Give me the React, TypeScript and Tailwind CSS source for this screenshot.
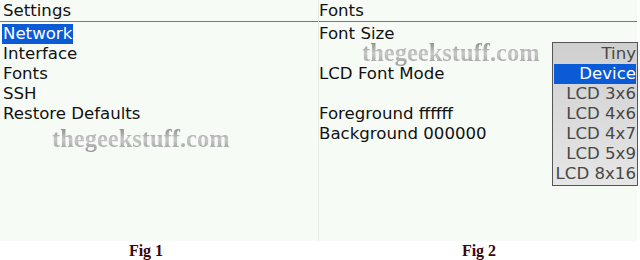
import React from 'react';

const settingsItems = ['Network', 'Interface', 'Fonts', 'SSH', 'Restore Defaults'];
const fontRows = ['Font Size', '', 'LCD Font Mode', '', 'Foreground ffffff', 'Background 000000'];
const sizeOptions = ['Tiny', 'Device', 'LCD 3x6', 'LCD 4x6', 'LCD 4x7', 'LCD 5x9', 'LCD 8x16'];

const Watermark: React.FC<{ className: string }> = ({ className }) => (
  <div
    className={`absolute font-bold text-[24.5px] leading-none text-transparent bg-clip-text bg-gradient-to-b from-[#8a8a8a] via-[#c8c8c8] to-[#9a9a9a] ${className}`}
    style={{ fontFamily: '"Liberation Serif", serif' }}
  >
    thegeekstuff.com
  </div>
);

const Screen: React.FC<{ title: string; children: React.ReactNode; className?: string; pad?: string }> = ({ title, children, className = '', pad = 'pl-[3px]' }) => (
  <div className={`relative h-full ${className}`}>
    <div className={`h-[22px] ${pad} text-[16.6px] leading-[21px] text-[#111] border-b border-[#7a7a7a]`}>{title}</div>
    <div className="pt-[2px]">{children}</div>
  </div>
);

export default function App() {
  return (
    <div className="w-[640px] h-[260px] bg-white overflow-hidden" style={{ fontFamily: '"DejaVu Sans", sans-serif' }}>
      <div className="flex h-[241px] w-[637px] bg-[#f6fbf6]">
        <Screen title="Settings" className="w-[318px] shrink-0">
          {settingsItems.map((item, i) => (
            <div key={item} className="h-[20px] pl-[3px] text-[16.6px] leading-[20px] text-[#111]">
              <span className={i === 0 ? 'bg-[#0b5ad6] text-white px-[1px] -ml-[1px] inline-block h-[20px]' : ''}>{item}</span>
            </div>
          ))}
          <Watermark className="left-[52px] top-[127px]" />
        </Screen>

        <Screen title="Fonts" pad="pl-0" className="w-[319px] shrink-0 border-l border-[#e8ece8]">
          {fontRows.map((row, i) => (
            <div key={i} className="h-[20px] text-[16.6px] leading-[20px] text-[#111]">{row}</div>
          ))}
          <Watermark className="left-[43px] top-[41px]" />
          <div className="absolute left-[233px] top-[42px] w-[86px] border border-[#555] bg-gradient-to-b from-[#cfcfcf] to-[#e6e6e6] p-[1px]">
            {sizeOptions.map((opt, i) => (
              <div
                key={opt}
                className={`h-[20px] text-right text-[16.6px] leading-[20px] whitespace-nowrap ${i === 1 ? 'bg-[#0b5ad6] text-white' : 'text-[#484848]'}`}
              >
                {opt}
              </div>
            ))}
          </div>
        </Screen>
      </div>
      <div className="flex h-[19px] text-[16px] font-bold text-[#3a0808] leading-[20px]" style={{ fontFamily: '"Liberation Serif", serif' }}>
        <div className="w-[292px] shrink-0 text-center">Fig 1</div>
        <div className="w-[374px] shrink-0 text-center">Fig 2</div>
      </div>
    </div>
  );
}
